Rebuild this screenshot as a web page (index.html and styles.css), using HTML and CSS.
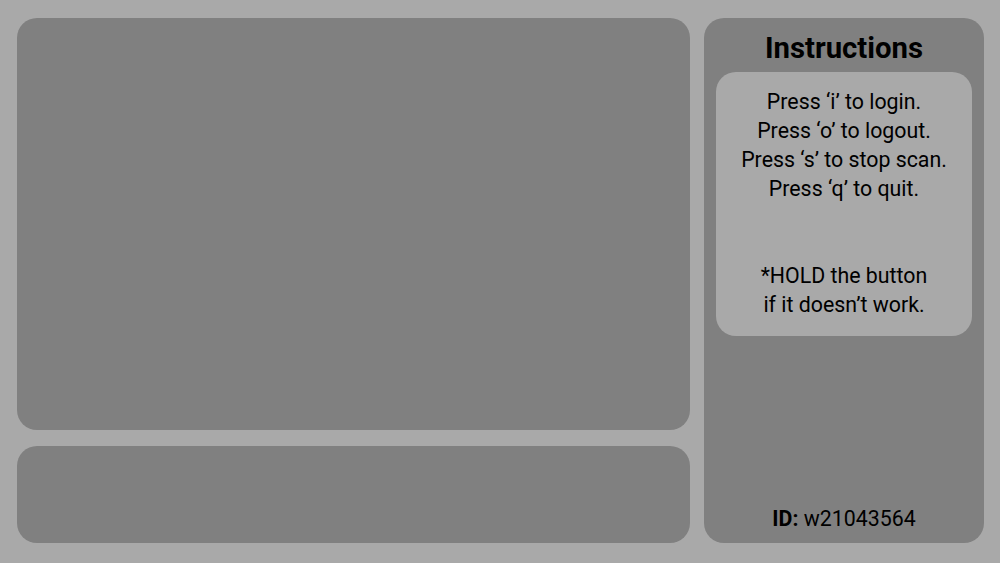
FILE: index.html
```html
<!DOCTYPE html>
<html lang="en">
<head>
  <meta charset="UTF-8">
  <meta name="viewport" content="width=device-width, initial-scale=1.0">
  <title>Scanner</title>
  <link rel="stylesheet" href="styles.css">
</head>
<body>
  <div class="app">
    <div class="main">
      <div class="screen"></div>
      <div class="status"></div>
    </div>

    <div class="side">
      <h2 class="title">Instructions</h2>
      <div class="help">
        <p>Press ‘i’ to login.</p>
        <p>Press ‘o’ to logout.</p>
        <p>Press ‘s’ to stop scan.</p>
        <p>Press ‘q’ to quit.</p>
        <p class="spacer"></p>
        <p>*HOLD the button</p>
        <p>if it doesn’t work.</p>
      </div>
      <div class="user-id"><b>ID:</b> w21043564</div>
    </div>
  </div>
</body>
</html>
```

FILE: styles.css
```css
body {
  margin: 0;
  background-color: #a9a9a9;
  font-family: Roboto, "Noto Sans", sans-serif;
  color: #000;
}
.app {
  display: flex;
  gap: 14px;
  height: 563px;
  box-sizing: border-box;
  padding: 18px 16px 20px 17px;
}
.main {
  display: flex;
  flex-direction: column;
  gap: 16px;
  width: 673px;
}
.screen {
  flex: 1;
  background-color: #808080;
  border-radius: 20px;
}
.status {
  height: 97px;
  background-color: #808080;
  border-radius: 20px;
}
.side {
  width: 280px;
  display: flex;
  flex-direction: column;
  box-sizing: border-box;
  padding: 13px 12px 12px 12px;
  background-color: #808080;
  border-radius: 20px;
}
.title {
  margin: 0 0 7px;
  font-size: 29.33px;
  font-weight: 700;
  text-align: center;
}
.help {
  background-color: #a9a9a9;
  border-radius: 20px;
  padding: 15px 8px 17px;
  text-align: center;
  font-size: 21.33px;
  line-height: 29px;
}
.help p {
  margin: 0;
}
.help .spacer {
  height: 58px;
}
.user-id {
  margin-top: auto;
  text-align: center;
  font-size: 21.33px;
}
```
